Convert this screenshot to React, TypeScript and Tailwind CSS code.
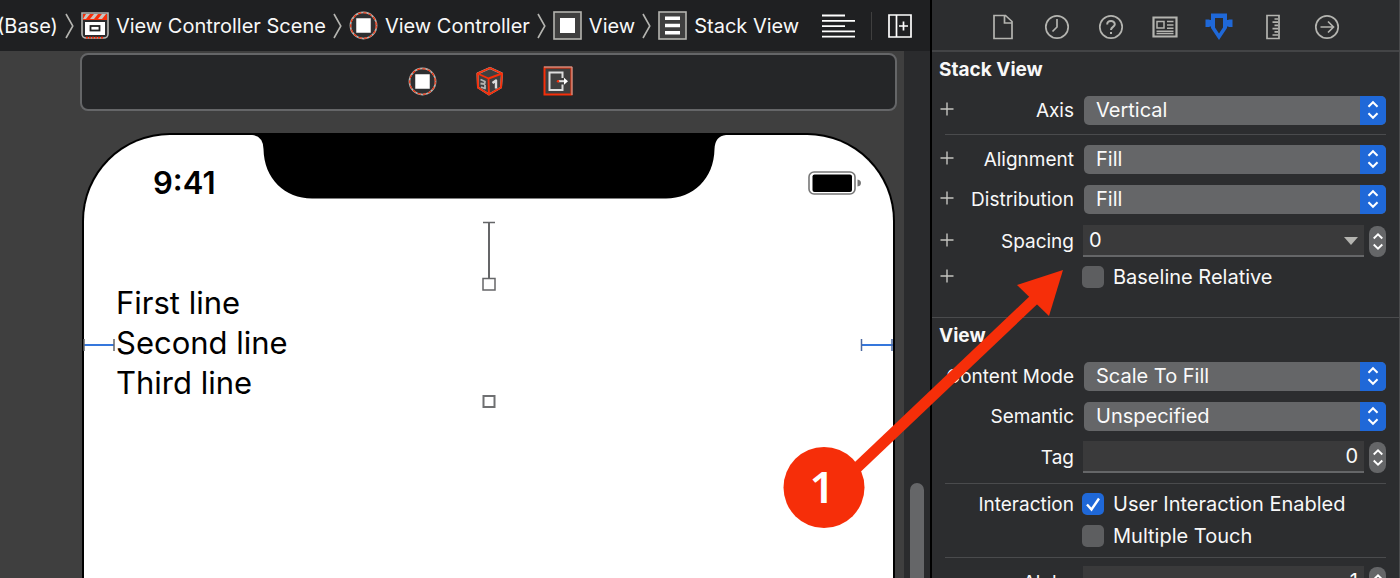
import React from "react";

const TEXT = "text-[#f8f8f8]";

function Crumb({ icon, label }: { icon?: React.ReactNode; label: string }) {
  return (
    <a href="#" className="flex shrink-0 items-center gap-[7px] whitespace-nowrap">
      {icon}
      <span>{label}</span>
    </a>
  );
}

function Separator() {
  return (
    <svg viewBox="0 0 9 26" className="h-[26px] w-[9px] shrink-0" fill="none" stroke="#b4b4b0" strokeWidth="1.6">
      <path d="M1 1 L7.8 13 L1 25" />
    </svg>
  );
}

function SceneIcon() {
  return (
    <svg viewBox="0 0 28 28" className="size-7 shrink-0">
      <path d="M1 1h26v21a4 4 0 0 1-4 4H5a4 4 0 0 1-4-4z" fill="#2a2b2d" stroke="#b4b4b0" strokeWidth="1.6" />
      <path d="M2 2h24v6H2z" fill="#f62e09" />
      <path d="M5 2h4l-4 5H2zM13 2h4l-4 5H9zM21 2h4l-4 5h-4z" fill="#c8c4c0" />
      <path d="M5 25.6h18" stroke="#f62e09" strokeWidth="1.6" strokeDasharray="2 1" />
      <rect x="4" y="10" width="20" height="13" fill="#fff" />
      <rect x="9.5" y="14" width="9" height="4.5" fill="#fff" stroke="#222" strokeWidth="1.8" />
    </svg>
  );
}

function ControllerIcon() {
  return (
    <svg viewBox="0 0 30 30" className="size-[29px] shrink-0">
      <circle cx="15" cy="15" r="13.5" fill="#2e2f31" stroke="#b4b4b0" strokeWidth="1.8" />
      <circle cx="15" cy="15" r="13.2" fill="none" stroke="#f62e09" strokeWidth="1.2" strokeDasharray="3.4 2.2" />
      <rect x="7.5" y="7.5" width="15" height="15" fill="#fff" />
    </svg>
  );
}

function ViewIcon() {
  return (
    <svg viewBox="0 0 29 29" className="size-[29px] shrink-0">
      <rect x="1" y="1" width="27" height="27" fill="#3f3f3f" stroke="#b4b4b0" strokeWidth="1.6" />
      <rect x="7" y="7" width="15" height="15" fill="#fff" />
    </svg>
  );
}

function StackIcon() {
  return (
    <svg viewBox="0 0 29 29" className="size-[29px] shrink-0">
      <rect x="1" y="1" width="27" height="27" fill="#3f3f3f" stroke="#b4b4b0" strokeWidth="1.6" />
      <path d="M7 5.5h15v3.6H7zM7 12.7h15v3.6H7zM7 19.9h15v3.6H7z" fill="#fff" />
    </svg>
  );
}

function JumpBar() {
  return (
    <header className="flex h-[51px] shrink-0 items-center justify-between bg-[#1f2022] pr-[18px] text-[20px] leading-6">
      <nav aria-label="Jump bar" className="-ml-[3px] flex items-center gap-[7px]">
        <Crumb label="(Base)" />
        <Separator />
        <Crumb icon={<SceneIcon />} label="View Controller Scene" />
        <Separator />
        <Crumb icon={<ControllerIcon />} label="View Controller" />
        <Separator />
        <Crumb icon={<ViewIcon />} label="View" />
        <Separator />
        <Crumb icon={<StackIcon />} label="Stack View" />
      </nav>
      <div className="flex shrink-0 items-center gap-4">
        <button aria-label="Editor options">
          <svg viewBox="0 0 33 24" className="h-6 w-[33px]" stroke="#fff" strokeWidth="1.8">
            <path d="M0 1.5h23M0 6.8h33M0 12.1h23M0 17.4h33M0 22.7h33" />
          </svg>
        </button>
        <div className="h-7 w-px bg-[#3f3f3f]" />
        <button aria-label="Add editor">
          <svg viewBox="0 0 24 24" className="size-6" fill="none" stroke="#fff" strokeWidth="1.7">
            <path d="M1 1h22v22H1zM8.5 1v22M11 12h9M15.5 7.5v9" />
          </svg>
        </button>
      </div>
    </header>
  );
}

function SceneDock() {
  return (
    <div className="mt-[2px] mr-[7px] ml-[80px] flex h-[58px] shrink-0 items-center justify-center gap-[39px] rounded-lg border-2 border-[#656668] bg-[#252628] pb-[2px] pl-1">
      <button aria-label="View Controller">
        <ControllerIcon />
      </button>
      <button aria-label="First Responder">
        <svg viewBox="0 0 28 30" className="h-[30px] w-7" fill="none" strokeLinejoin="round">
          <path d="M14 2 26 7.5 25 21.5 13 28.500 2 21.500 1.500 7.500z" fill="#3f3f3f" stroke="#b4b4b0" strokeWidth="2" />
          <path d="M14 2 26 7.500 25 21.500 13 28.500 2 21.500 1.500 7.500zM1.500 7.500 12.500 12.500 26 7.500M12.500 12.500 13 28.500" stroke="#f62e09" strokeWidth="1.900" />
          <path d="M16.500 17 20 14.500V22.500" stroke="#ddd" strokeWidth="2.400" />
          <path d="M4.500 13.500 9 15.500 8.500 18 4.500 17.500M5 21 9 22.500V19" stroke="#b4b4b0" strokeWidth="1.800" />
        </svg>
      </button>
      <button aria-label="Exit">
        <svg viewBox="0 0 30 30" className="size-[30px]" fill="none">
          <rect x="1.500" y="1.500" width="27" height="27" fill="#3f3f3f" stroke="#f62e09" strokeWidth="2" />
          <path d="M1 1H29V29" stroke="#b4b4b0" strokeWidth="1" />
          <path d="M19.500 12V6.500H6.500V24H19.500V18.500" stroke="#ddd" strokeWidth="2" />
          <path d="M15 15.200h8" stroke="#ddd" strokeWidth="2" />
          <path d="M21 11.700 25 15.200 21 18.700z" fill="#fff" />
          <circle cx="15" cy="15.200" r="1.200" fill="#f62e09" />
        </svg>
      </button>
    </div>
  );
}

function Device() {
  return (
    <div className="relative mt-[22px] mr-[9px] ml-[82px] flex grow flex-col rounded-t-[88px] border-2 border-b-0 border-black bg-white text-black">
      <div className="flex h-[64px] items-start justify-between pr-[32px] pl-[69px]">
        <span className="mt-[30px] w-[98px] text-[31px] leading-9 font-semibold">9:41</span>
        <svg viewBox="0 0 474 66" className="-mt-[2px] h-[66px] w-[474px] shrink-0">
          <path d="M0 0H474V2Q463 3 462.500 16C462 46 441 65.500 414 65.500H60C33 65.500 12 46 11.500 16Q11 3 0 2z" fill="#000" />
        </svg>
        <div className="flex w-[135px] justify-end">
          <svg viewBox="0 0 53 24" className="mt-[36px] h-6 w-[53px]">
            <rect x="1" y="1" width="46" height="22" rx="5" fill="none" stroke="#777" strokeWidth="1.600" />
            <rect x="4.500" y="3.500" width="39.500" height="17.500" rx="2" fill="#000" />
            <path d="M49.500 8.500Q53 9 53 12T49.500 15.500z" fill="#777" />
          </svg>
        </div>
      </div>
      <div className="mt-[84px] ml-[32px] text-[31px] leading-10">
        <p>First line</p>
        <p>Second line</p>
        <p>Third line</p>
      </div>
      <svg viewBox="0 0 14 70" className="absolute top-[86px] right-1/2 h-[70px] w-[14px] translate-x-1/2" fill="none" stroke="#656668">
        <path d="M1 1.500H13M1 57.500H13V69H1z" strokeWidth="1.500" />
        <path d="M7 2V57" strokeWidth="2" />
      </svg>
      <div className="absolute top-[260px] right-1/2 size-[13px] translate-x-1/2 border-2 border-[#6f7072]" />
      <svg viewBox="0 0 32 14" className="absolute top-[203px] -left-px h-[14px] w-8" fill="none">
        <path d="M1 7H31" stroke="#1f68d8" strokeWidth="1.800" />
        <path d="M1 1V13M31 1V13" stroke="#656668" strokeWidth="1.500" />
      </svg>
      <svg viewBox="0 0 34 14" className="absolute top-[203px] -right-px h-[14px] w-[34px]" fill="none">
        <path d="M1 7H33" stroke="#1f68d8" strokeWidth="1.800" />
        <path d="M1.500 1V13M32 1V13" stroke="#4b68a0" strokeWidth="1.500" />
      </svg>
    </div>
  );
}

const tabIcons: { label: string; icon: React.ReactNode }[] = [
  { label: "File", icon: <path d="M6 3.500H17.500L24 9.500V26.500H6zM16.500 4V11H23.500" /> },
  {
    label: "History",
    icon: (
      <>
        <circle cx="15" cy="15" r="11.200" />
        <path d="M15 7V15L10.500 19.500" />
      </>
    ),
  },
  {
    label: "Quick Help",
    icon: (
      <>
        <circle cx="15" cy="15" r="11.200" />
        <path d="M11.200 12.500C11.200 8 18.800 8 18.800 12.300C18.800 15 15 14.800 15 18M15 20V22" strokeWidth="2" />
      </>
    ),
  },
  {
    label: "Identity",
    icon: (
      <>
        <path d="M3.500 5.500H26.500V24.500H3.500z" strokeWidth="2.200" />
        <path d="M7 9.500H14V16H7zM17 9.500H23.500M17 13H23.500M17 16.200H23.500M6.500 19.200H23.500M6.500 21.500H23.500" strokeWidth="1.500" />
      </>
    ),
  },
  {
    label: "Attributes",
    icon: (
      <path
        d="M7 1.500H23V8H24.500V7.500H28.500V15H24.500V14.500H23V16L15 28 7 16V14.500H5.500V15H1.500V7.500H5.500V8H7zM11 6V15.500L15 21.500 19 15.500V6z"
        fill="#1f68d8"
        fillRule="evenodd"
        stroke="none"
      />
    ),
  },
  { label: "Size", icon: <path d="M9 3.500H21V26.500H9zM16.500 7H20M14.500 10.200H20M16.500 13.400H20M14.500 16.600H20M16.500 19.800H20M14.500 23H20" /> },
  {
    label: "Connections",
    icon: (
      <>
        <circle cx="15" cy="15" r="11.200" />
        <path d="M8.500 15H21M16 9.500 21.500 15 16 20.500" />
      </>
    ),
  },
];

function PlusButton({ label }: { label: string }) {
  return (
    <button aria-label={`Add variation for ${label}`} className="-mt-[2px] ml-[7px] w-4">
      <svg viewBox="0 0 16 16" className="size-4" stroke="#c4c4c0" strokeWidth="1.400">
        <path d="M1.500 8H14.500M8 1.500V14.500" />
      </svg>
    </button>
  );
}

function Row({ label, id, plus, children, className }: { label: string; id?: string; plus?: string; children: React.ReactNode; className: string }) {
  return (
    <div className={`flex items-center ${className}`}>
      <div className="flex w-[142px] shrink-0 items-center justify-between">
        {plus ? <PlusButton label={plus} /> : <span />}
        <label htmlFor={id} className="pt-[2px] text-[19px] whitespace-nowrap">
          {label}
        </label>
      </div>
      {children}
    </div>
  );
}

function Arrows({ className }: { className: string }) {
  return (
    <svg viewBox="0 0 14 22" className={className} fill="none" stroke="#fff" strokeWidth="2.200">
      <path d="M2 7.500 7 2.500 12 7.500M2 14.500 7 19.500 12 14.500" />
    </svg>
  );
}

function Select({ id, value }: { id: string; value: string }) {
  return (
    <div className="relative mr-[13px] ml-[10px] h-[29px] grow">
      <select id={id} className="block h-[29px] w-full appearance-none rounded-[5px] bg-[#656668] pl-3 text-[20px] leading-7 text-[#fafafa]">
        <option>{value}</option>
      </select>
      <div className="pointer-events-none absolute inset-y-0 right-0 flex w-[26px] items-center justify-center rounded-r-[5px] bg-[#1f68d8]">
        <Arrows className="h-[20px] w-[14px]" />
      </div>
    </div>
  );
}

function Stepper({ label }: { label: string }) {
  return (
    <button aria-label={label} className="mr-[13px] flex h-[31px] w-[17px] shrink-0 items-center justify-center rounded-lg bg-[#656668]">
      <Arrows className="h-[21px] w-3" />
    </button>
  );
}

function NumberField({ id, value, menu }: { id: string; value: string; menu?: boolean }) {
  return (
    <div className="relative mr-[5px] ml-[9px] h-8 grow">
      <input
        id={id}
        defaultValue={value}
        className={
          menu
            ? "block h-8 w-full border-b-2 border-[#656668] bg-[#3a3a3b] px-[6px] text-[20px] text-[#fafafa]"
            : "block h-8 w-full border-b-2 border-[#656668] bg-[#3a3a3b] px-[6px] text-right text-[20px] text-[#fafafa]"
        }
      />
      {menu && (
        <svg viewBox="0 0 14 8" className="pointer-events-none absolute top-3 right-[6px] h-2 w-[14px]" fill="#b4b4b0">
          <path d="M0 0H14L7 8z" />
        </svg>
      )}
    </div>
  );
}

function Check({ id, label, checked }: { id: string; label: string; checked?: boolean }) {
  return (
    <div className="ml-2 flex items-center gap-[9px]">
      <div className="relative size-[22px]">
        <input
          id={id}
          type="checkbox"
          defaultChecked={checked}
          className="peer block size-[22px] appearance-none rounded-[5px] bg-[#5d5e60] checked:bg-[#1f68d8]"
        />
        <svg viewBox="0 0 22 22" className="pointer-events-none absolute inset-0 hidden size-[22px] peer-checked:block" fill="none" stroke="#fff" strokeWidth="2.400">
          <path d="M5 11.500 9.500 16.500 17 5.500" />
        </svg>
      </div>
      <label htmlFor={id} className="text-[20px] whitespace-nowrap">
        {label}
      </label>
    </div>
  );
}

function Rule() {
  return <div className="mr-[13px] ml-[13px] h-px shrink-0 bg-[#4a4b4d]" />;
}

function Inspector() {
  return (
    <aside className="flex w-[470px] shrink-0 flex-col overflow-hidden border-r border-l-2 border-r-[#4a4b4d] border-l-black bg-[#2c2d2f] leading-6">
      <div className="flex h-[52px] shrink-0 items-center justify-center border-b-2 border-[#434446] pt-1 pr-[1px]">
        {tabIcons.map((t) => (
          <button key={t.label} aria-label={t.label} className="flex w-[54px] justify-center">
            <svg viewBox="0 0 30 30" className="h-[30px] w-[30px]" fill="none" stroke="#b4b4b0" strokeWidth="1.700">
              {t.icon}
            </svg>
          </button>
        ))}
      </div>

      <section className="flex shrink-0 flex-col border-b border-[#4a4b4d] pb-6">
        <h2 className="mt-[6px] mb-[9px] pl-[7px] text-[19px] font-bold">Stack View</h2>
        <Row label="Axis" id="axis" plus="Axis" className="mt-[3px] mb-2 h-[32px]">
          <Select id="axis" value="Vertical" />
        </Row>
        <Rule />
        <Row label="Alignment" id="alignment" plus="Alignment" className="mt-1 h-10">
          <Select id="alignment" value="Fill" />
        </Row>
        <Row label="Distribution" id="distribution" plus="Distribution" className="h-10">
          <Select id="distribution" value="Fill" />
        </Row>
        <Row label="Spacing" id="spacing" plus="Spacing" className="mt-[2px] h-10">
          <NumberField id="spacing" value="0" menu />
          <Stepper label="Step spacing" />
        </Row>
        <Row label="" plus="Baseline Relative" className="h-8">
          <Check id="baseline" label="Baseline Relative" />
        </Row>
      </section>

      <section className="flex shrink-0 flex-col">
        <h2 className="mt-[6px] mb-2 pl-[7px] text-[19px] font-bold">View</h2>
        <Row label="Content Mode" id="mode" className="h-10">
          <Select id="mode" value="Scale To Fill" />
        </Row>
        <Row label="Semantic" id="semantic" className="h-10">
          <Select id="semantic" value="Unspecified" />
        </Row>
        <Row label="Tag" id="tag" className="mt-[1px] mb-[6px] h-10">
          <NumberField id="tag" value="0" />
          <Stepper label="Step tag" />
        </Row>
        <Rule />
        <Row label="Interaction" id="interaction" className="mt-1 h-8">
          <Check id="interaction" label="User Interaction Enabled" checked />
        </Row>
        <Row label="" className="h-8">
          <Check id="touch" label="Multiple Touch" />
        </Row>
        <div className="h-[5px]" />
        <Rule />
        <Row label="Alpha" id="alpha" className="mt-1 h-10">
          <NumberField id="alpha" value="1" />
          <Stepper label="Step alpha" />
        </Row>
      </section>
    </aside>
  );
}

function Callout() {
  return (
    <div className="pointer-events-none absolute top-[268px] right-[336px] h-[262px] w-[282px]">
      <svg viewBox="0 0 282 262" className="h-[262px] w-[282px]" fill="#f62e09">
        <path d="M62 212 258 26" stroke="#f62e09" strokeWidth="11" />
        <path d="M281 2 235 17 267 48z" />
        <circle cx="42" cy="219.500" r="40.500" />
      </svg>
      <span className="absolute bottom-1 left-0 flex size-20 items-center justify-center font-['Noto_Sans'] text-[44px] font-semibold text-white">1</span>
    </div>
  );
}

export default function App() {
  return (
    <div className={`relative flex h-screen overflow-hidden bg-[#3f3f3f] font-['Inter','Liberation_Sans',sans-serif] ${TEXT}`}>
      <main className="flex min-w-0 grow flex-col overflow-hidden">
        <JumpBar />
        <div className="flex min-h-0 grow">
          <div className="flex min-w-0 grow flex-col">
            <SceneDock />
            <Device />
          </div>
          <div className="flex w-[26px] shrink-0 flex-col justify-end bg-[#2a2b2d] px-[6px]">
            <div className="h-[18%] rounded-t-full bg-[#656668]" />
          </div>
        </div>
      </main>
      <Inspector />
      <Callout />
    </div>
  );
}
